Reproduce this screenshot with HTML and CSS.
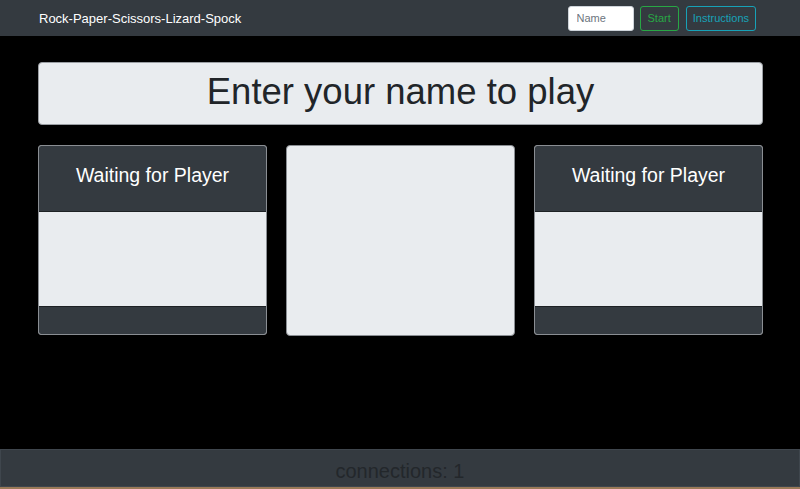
FILE: index.html
```html
<!DOCTYPE html>
<html>
<head>
<meta charset="utf-8">
<link rel="stylesheet" href="styles.css">
</head>
<body>
<nav class="navbar">
  <span class="brand">Rock-Paper-Scissors-Lizard-Spock</span>
  <form class="nav-form">
    <input class="name-input" type="text" placeholder="Name">
    <button class="btn btn-start" type="button">Start</button>
    <button class="btn btn-info" type="button">Instructions</button>
  </form>
</nav>
<main class="main">
  <div class="jumbo">Enter your name to play</div>
  <div class="cards">
    <div class="card player">
      <div class="card-header">Waiting for Player</div>
      <div class="card-body"></div>
      <div class="card-footer"></div>
    </div>
    <div class="card center"></div>
    <div class="card player">
      <div class="card-header">Waiting for Player</div>
      <div class="card-body"></div>
      <div class="card-footer"></div>
    </div>
  </div>
</main>
<footer class="footer">connections: 1</footer>
<div class="strip"></div>
</body>
</html>
```
FILE: styles.css
```css
* { box-sizing: border-box; }
html, body { margin: 0; padding: 0; }
body {
  background: #000;
  font-family: "Liberation Sans", Arial, sans-serif;
  width: 800px;
  height: 489px;
  overflow: hidden;
}
.navbar {
  height: 36px;
  background: #343a40;
  display: flex;
  align-items: center;
  justify-content: space-between;
  padding: 0 44px 0 39px;
}
.brand {
  color: #fff;
  font-size: 13px;
}
.nav-form {
  display: flex;
  align-items: center;
  gap: 6px;
  margin: 0;
}
.name-input {
  width: 66px;
  height: 25px;
  border: 1px solid #ced4da;
  border-radius: 3px;
  background: #fff;
  font-family: inherit;
  font-size: 11px;
  padding: 0 8px;
  color: #495057;
}
.name-input::placeholder { color: #6c757d; }
.btn {
  height: 25px;
  background: transparent;
  border-radius: 3px;
  font-family: inherit;
  font-size: 11px;
  padding: 0 7px;
  border: 1px solid;
}
.btn-start { color: #28a745; border-color: #28a745; }
.btn-info { color: #17a2b8; border-color: #17a2b8; margin-left: 1px; padding: 0 6px; }
.main {
  height: 413px;
  padding: 26px 37px 0 38px;
}
.jumbo {
  height: 63px;
  background: #e9ecef;
  border: 1px solid #9a9ea3;
  border-radius: 4px;
  color: #212529;
  font-size: 36.5px;
  display: flex;
  align-items: center;
  justify-content: center;
  padding-bottom: 4px;
}
.cards {
  margin-top: 20px;
  display: flex;
  gap: 19px;
}
.card {
  width: 229px;
  height: 190px;
  border: 1px solid #8a8e93;
  border-radius: 3px;
  overflow: hidden;
  display: flex;
  flex-direction: column;
  background: #e9ecef;
}
.card-header {
  height: 66px;
  background: #343a40;
  color: #fff;
  font-size: 19.5px;
  text-align: center;
  padding-top: 18px;
  border-bottom: 1px solid #1d2124;
}
.card-body {
  flex: 1;
  background: #e9ecef;
}
.card-footer {
  height: 28px;
  background: #343a40;
  border-top: 1px solid #1d2124;
}
.center {
  height: 191px;
  border-radius: 4px;
}
.footer {
  height: 38px;
  background: #343a40;
  border: 1px solid #3f464d;
  color: #23272b;
  font-size: 20px;
  display: flex;
  align-items: center;
  justify-content: center;
  padding-top: 6px;
}
.strip {
  height: 2px;
  background: #9b7a58;
}
```
